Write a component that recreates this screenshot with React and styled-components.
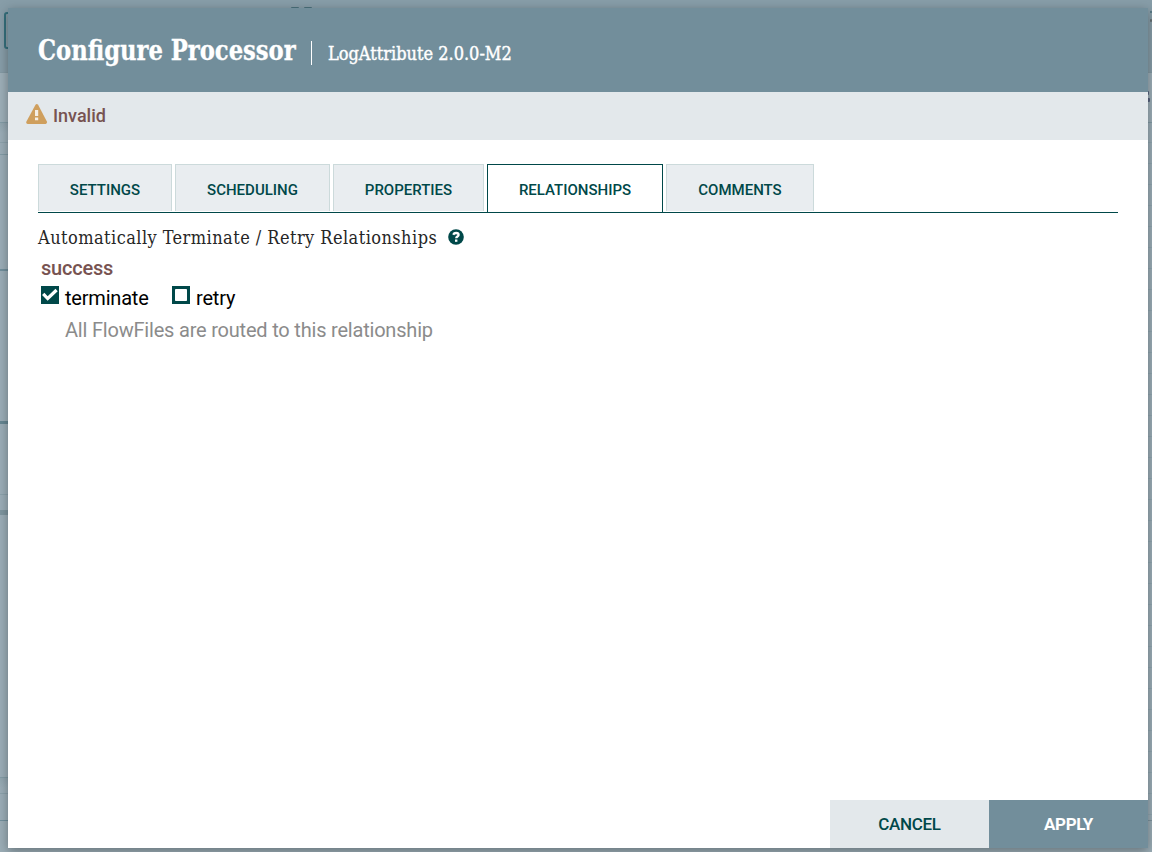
import React from 'react';
import styled, { createGlobalStyle } from 'styled-components';

const slab = '"Roboto Slab", "DejaVu Serif Condensed", "DejaVu Serif", serif';

const GlobalStyle = createGlobalStyle`
  * { box-sizing: border-box; }
  body { margin: 0; font-family: Roboto, "Liberation Sans", sans-serif; }
`;

const Screen = styled.div`
  position: relative;
  width: 1152px;
  height: 852px;
  overflow: hidden;
  background: #9badb6;
`;

const Backdrop = styled.div`
  display: flex;
  flex-direction: column;
  height: 100%;
`;

const Workspace = styled.div`
  display: grid;
  grid-template-columns: 320px 1fr;
  flex: 1;
`;

const Palette = styled.div`
  display: flex;
  flex-direction: column;
`;

const Canvas = styled.div`
  height: 698px;
  border-bottom: 1px solid #7e949e;
  background: repeating-linear-gradient(#9badb7 0 19px, #90a6b0 19px 20px, #9badb7 20px 21px);
`;

const Band = styled.div`
  flex: none;
  height: ${p => p.$h}px;
  background: ${p => p.$bg || '#9badb7'};
  border-bottom: ${p => p.$line || 1}px solid ${p => p.$rule || '#829ba5'};
`;

const TopBand = styled(Band)`
  position: relative;
`;

const ToolFrame = styled.div`
  position: absolute;
  left: 4px;
  top: 12px;
  width: 40px;
  height: 37px;
  border: 2px solid #35707d;
  border-radius: 3px;
`;

const ToolMark = styled.div`
  position: absolute;
  left: ${p => p.$x}px;
  top: ${p => p.$y}px;
  width: ${p => p.$w}px;
  height: ${p => p.$h}px;
  background: ${p => p.$c || '#4b717c'};
  border-radius: 1px;
`;

const InfoBand = styled(Band)`
  position: relative;
`;

const Dialog = styled.section`
  position: absolute;
  inset: 8px 4px 4px 8px;
  display: flex;
  flex-direction: column;
  background: #fff;
  box-shadow: 0 3px 10px rgba(0, 0, 0, 0.34);
`;

const Header = styled.header`
  display: flex;
  align-items: flex-start;
  height: 84px;
  padding: 24px 30px 0;
  background: #728e9b;
  color: #fff;
  font-family: ${slab};
  white-space: nowrap;
`;

const Title = styled.h1`
  width: 258px;
  margin: 1px 0 0;
  font-size: 28px;
  line-height: 36px;
  font-weight: 700;
  transform: scaleX(0.9);
  transform-origin: left;
  -webkit-text-stroke: 0.3px #fff;
`;

const Divider = styled.span`
  width: 1px;
  height: 24px;
  margin: 9px 16px 0 15px;
  background: #fff;
`;

const Subtitle = styled.span`
  padding-top: 10px;
  font-size: 18px;
  line-height: 24px;
  font-weight: 400;
  -webkit-text-stroke: 0.4px #fff;
`;

const Status = styled.div`
  display: flex;
  align-items: center;
  gap: 5px;
  height: 48px;
  padding: 0 18px 2px;
  background: #e3e8eb;
  color: #775351;
  font-size: 18px;
  font-weight: 500;
  svg { margin-top: -3px; }
`;

const Body = styled.main`
  flex: 1;
  padding: 24px 30px 0;
`;

const Tabs = styled.nav`
  display: flex;
  gap: 3px;
  height: 49px;
  border-bottom: 1px solid #004849;
`;

const Tab = styled.button`
  flex: none;
  width: ${p => p.$w}px;
  height: ${p => (p.$active ? 48 : 47)}px;
  padding: ${p => (p.$active ? '3px 0 1px' : '3px 0 0')};
  border: 1px solid ${p => (p.$active ? '#004849' : '#ccdadb')};
  border-bottom: 0;
  background: ${p => (p.$active ? '#fff' : '#e9edf0')};
  color: #004849;
  font: 500 15px/18px Roboto, "Liberation Sans", sans-serif;
`;

const Heading = styled.h2`
  display: flex;
  align-items: center;
  height: 24px;
  margin: 12px 0 0;
  color: #262626;
  font-family: ${slab};
  font-size: 18px;
  font-weight: 400;
  white-space: nowrap;
`;

const HeadingText = styled.span`
  width: 410px;
  letter-spacing: 0.45px;
`;

const Relationship = styled.div`
  padding-left: 3px;
  font-size: 20px;
  line-height: 24px;
  letter-spacing: -0.2px;
`;

const Name = styled.div`
  margin-top: 7px;
  color: #775351;
  font-weight: 500;
`;

const Choices = styled.div`
  display: flex;
  gap: 23.4px;
  margin-top: 6px;
`;

const Choice = styled.label`
  display: flex;
  gap: 6px;
  color: #000;
`;

const Description = styled.p`
  margin: 8px 0 0 24px;
  color: #8b8b8b;
`;

const Footer = styled.footer`
  display: flex;
  justify-content: flex-end;
  height: 48px;
`;

const Action = styled.button`
  width: 159px;
  padding: 0 0 1px;
  border: 0;
  background: ${p => (p.$primary ? '#728e9b' : '#e3e8eb')};
  color: ${p => (p.$primary ? '#fff' : '#004849')};
  font: ${p => (p.$primary ? 700 : 500)} 17px/20px Roboto, "Liberation Sans", sans-serif;
  letter-spacing: ${p => (p.$primary ? -0.4 : -0.3)}px;
`;

const WarningIcon = () => (
  <svg width="22" height="20" viewBox="0 0 22 20">
    <path d="M9.5.8Q10.8-.6 12.1.8L21 17.8Q21.3 19.7 19.7 20H1.7Q-.2 19.7.3 17.8Z" fill="#cf9f5d" />
    <path d="M9 6h3.2v6H9zM9 13.5h3.2v2.8H9z" fill="#f5efe5" />
  </svg>
);

const HelpIcon = () => (
  <svg width="16" height="16" viewBox="0 0 16 16">
    <circle cx="8" cy="8" r="7.8" fill="#004849" />
    <path d="M5.2 5.8Q6 4 8.1 4q2.5 0 2.5 1.9c0 1.6-2.4 1.5-2.4 3.3" fill="none" stroke="#fff" strokeWidth="2.3" />
    <path d="M7 10.5h2.4v2.3H7z" fill="#fff" />
  </svg>
);

const CheckIcon = ({ checked }) => (
  <svg width="18" height="18" viewBox="0 0 18 18">
    <path d="M0 0h18v18H0z" fill="#004849" />
    {checked
      ? <path d="M2.2 7.8l4.5 4.7L15.6 4" fill="none" stroke="#fff" strokeWidth="3.2" />
      : <rect x="3" y="3" width="12" height="12" rx=".8" fill="#fff" />}
  </svg>
);

const tabs = [
  ['SETTINGS', 134], ['SCHEDULING', 155], ['PROPERTIES', 151],
  ['RELATIONSHIPS', 176], ['COMMENTS', 148],
];

export default function App() {
  return (
    <Screen>
      <GlobalStyle />
      <Backdrop>
        <TopBand $h={73} $bg="#879da8" $rule="#8399a3">
          <ToolFrame />
          <ToolMark $x={291} $y={7} $w={8} $h={3} />
          <ToolMark $x={304} $y={7} $w={8} $h={3} />
          <ToolMark $x={1150} $y={11} $w={2} $h={2} />
          <ToolMark $x={1150} $y={19} $w={2} $h={3} $c="#656f72" />
        </TopBand>
        <InfoBand $h={50} $bg="#9dafb8">
          <ToolMark $x={1147} $y={18} $w={2} $h={4} $c="#56627e" />
          <ToolMark $x={1147} $y={25} $w={3} $h={4} $c="#56627e" />
        </InfoBand>
        <Workspace>
          <Palette>
            <Band $h={20} $bg="linear-gradient(#91a5af, #9badb7 10px)" $rule="#8da2ac" />
            <Band $h={12} />
            <Band $h={116} $line={2} $rule="#718f9c" />
            <Band $h={153} $line={3} $rule="#668692" />
            <Band $h={71} $rule="#8ba1ab" />
            <Band $h={20} $line={5} $rule="#7e959f" />
            <Band $h={263} />
            <Band $h={16} $bg="linear-gradient(#91a5af, #9badb7 10px)" $rule="#8ba1ab" />
            <Band $h={27} $rule="#718f9c" />
          </Palette>
          <Canvas />
        </Workspace>
      </Backdrop>
      <Dialog>
        <Header>
          <Title>Configure Processor</Title>
          <Divider />
          <Subtitle>LogAttribute 2.0.0-M2</Subtitle>
        </Header>
        <Status><WarningIcon />Invalid</Status>
        <Body>
          <Tabs>
            {tabs.map(([label, width]) => (
              <Tab key={label} $w={width} $active={label === 'RELATIONSHIPS'}>{label}</Tab>
            ))}
          </Tabs>
          <Heading>
            <HeadingText>Automatically Terminate / Retry Relationships</HeadingText>
            <HelpIcon />
          </Heading>
          <Relationship>
            <Name>success</Name>
            <Choices>
              <Choice><CheckIcon checked />terminate</Choice>
              <Choice><CheckIcon />retry</Choice>
            </Choices>
            <Description>All FlowFiles are routed to this relationship</Description>
          </Relationship>
        </Body>
        <Footer>
          <Action>CANCEL</Action>
          <Action $primary>APPLY</Action>
        </Footer>
      </Dialog>
    </Screen>
  );
}
